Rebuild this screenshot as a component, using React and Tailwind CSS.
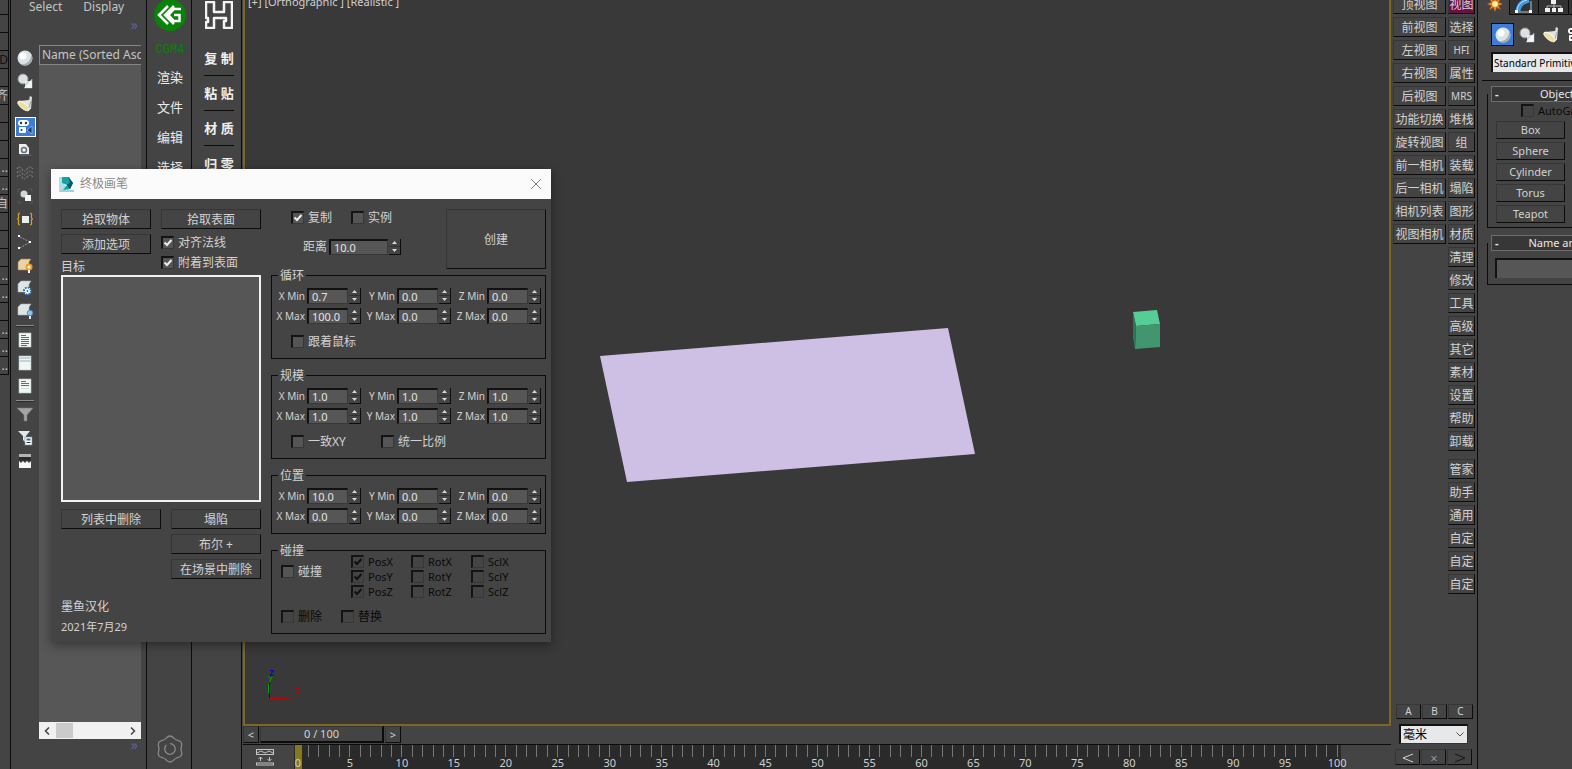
import React from 'react';
import clsx from 'clsx';

const edgeCells = ['', '', 'D', '', '齐', '', '', '', '..', '..', '自', '', '', '', '..', '..', '', '..', '..', '..'];

const cameraTools = ['顶视图', '前视图', '左视图', '右视图', '后视图', '功能切换', '旋转视图', '前一相机', '后一相机', '相机列表', '视图相机'];
const menuTools = ['视图', '选择', 'HFI', '属性', 'MRS', '堆栈', '组', '装载', '塌陷', '图形', '材质', '清理', '修改', '工具', '高级', '其它', '素材', '设置', '帮助', '卸载'];
const extraTools = ['管家', '助手', '通用', '自定', '自定', '自定'];

const frames = Array.from({ length: 101 }, (_, i) => i);

/* ---------- shared controls ---------- */

const PushButton = ({ children, className, active }) => (
  <button
    type="button"
    className={clsx(
      'shrink-0 flex items-center justify-center pt-px whitespace-nowrap border border-t-[#363636] border-l-[#363636] border-r-[#0c0c0c] border-b-[#0c0c0c] text-[#d2d2d2]',
      active ? 'bg-[#6b0f44]' : 'bg-[#444444]',
      className
    )}
  >
    {children}
  </button>
);

const Check = ({ label, checked, disabled, className }) => (
  <label className={clsx('flex items-center gap-1 h-[13px] leading-[13px] whitespace-nowrap', disabled ? 'text-[#0a0a0a]' : 'text-[#d2d2d2]', className)}>
    <span className="grid shrink-0">
      <input
        type="checkbox"
        defaultChecked={checked}
        disabled={disabled}
        className="peer appearance-none [grid-area:1/1] w-[13px] h-[13px] border-t-2 border-l-2 border-r border-b border-t-[#141414] border-l-[#141414] border-r-[#383838] border-b-[#383838] bg-[#555555] disabled:bg-[#444444]"
      />
      <svg viewBox="0 0 13 13" className="[grid-area:1/1] w-[13px] h-[13px] invisible peer-checked:visible pointer-events-none" fill="none" stroke={disabled ? '#111' : '#eee'} strokeWidth="2">
        <path d="M3.5 6.5 L6 9 L10.5 4" />
      </svg>
    </span>
    {label}
  </label>
);

const Arrows = () => (
  <span className="shrink-0 flex flex-col w-3 h-4 border-r border-b border-[#0c0c0c]">
    <button type="button" aria-label="up" className="flex-1 flex items-center justify-center border-b border-[#303030]">
      <svg viewBox="0 0 5 3" className="w-[5px] h-[3px]" fill="#d8d8d8"><path d="M2.5 0 L5 3 H0 Z" /></svg>
    </button>
    <button type="button" aria-label="down" className="flex-1 flex items-center justify-center">
      <svg viewBox="0 0 5 3" className="w-[5px] h-[3px]" fill="#d8d8d8"><path d="M2.5 3 L5 0 H0 Z" /></svg>
    </button>
  </span>
);

const inputStyle = 'h-4 min-w-0 border-t-2 border-l-2 border-r border-b border-t-[#121212] border-l-[#121212] border-r-[#383838] border-b-[#383838] bg-[#565656] pl-[3px] text-[11px] leading-[13px] text-[#e4e4e4] outline-none';

const Spinner = ({ label, value }) => (
  <div className="flex items-center w-[90px] gap-px">
    <label className="flex items-center gap-[2px]">
      <span className="w-[33px] text-right text-[10px] leading-4 text-[#d2d2d2] whitespace-nowrap">{label}</span>
      <input type="text" defaultValue={value} className={clsx(inputStyle, 'w-[41px]')} />
    </label>
    <Arrows />
  </div>
);

const Axes = ({ min, max }) => (
  <div className="flex flex-col gap-1 pt-[7px]">
    <div className="flex">
      {['X', 'Y', 'Z'].map((a, i) => <Spinner key={a} label={`${a} Min`} value={min[i]} />)}
    </div>
    <div className="flex">
      {['X', 'Y', 'Z'].map((a, i) => <Spinner key={a} label={`${a} Max`} value={max[i]} />)}
    </div>
  </div>
);

const Group = ({ title, children, className }) => (
  <fieldset className={clsx('border border-[#0c0c0c] min-w-0', className)}>
    <legend className="ml-1.5 px-0.5 h-3 leading-[14px] text-[#d2d2d2]">{title}</legend>
    {children}
  </fieldset>
);

/* ---------- paint brush window ---------- */

const BrushWindow = () => (
  <section className="absolute left-[51px] top-[169px] w-[500px] bg-[#444444] text-xs shadow-[0_3px_10px_rgba(0,0,0,0.4)]">
    <header className="flex items-center h-[30px] bg-[#fbfbfb] pl-2 pr-[9px] text-[#8c8c8c]">
      <svg viewBox="0 0 16 16" className="w-4 h-4 mr-[5px]">
        <path d="M0 1 H11 L5 8 L12 16 H0 Z" fill="#b5dde6" />
        <path d="M3 1 L10 1 L14 7 L11 13 L4 14 L8 9 L3 7 Z" fill="#12a5a5" />
        <path d="M9 1 L14 7 L11 13 L8 9 L11 6 Z" fill="#07575e" />
        <path d="M1 15 H15" stroke="#9fd3dc" strokeWidth="2" />
      </svg>
      <h1 className="flex-1">终极画笔</h1>
      <button type="button" aria-label="close">
        <svg viewBox="0 0 12 12" className="w-3 h-3" stroke="#8a8a8a"><path d="M1 1 L11 11 M11 1 L1 11" /></svg>
      </button>
    </header>
    <div className="flex gap-[10px] pt-[10px] pl-[10px] pr-[5px] pb-[5px]">
      <div className="w-[200px]">
        <div className="flex gap-[10px]">
          <div className="flex flex-col gap-[5px]">
            <PushButton className="w-[90px] h-5">拾取物体</PushButton>
            <PushButton className="w-[90px] h-5">添加选项</PushButton>
            <label htmlFor="targets" className="h-[14px] leading-4 text-[#d2d2d2]">目标</label>
          </div>
          <div className="flex flex-col gap-[7px]">
            <PushButton className="w-[100px] h-5">拾取表面</PushButton>
            <Check label="对齐法线" checked />
            <Check label="附着到表面" checked />
          </div>
        </div>
        <select id="targets" size="8" className="block w-full h-[227px] mt-[2px] border-2 border-[#f2f2f2] bg-[#565656] outline-none overflow-hidden" />
        <div className="flex justify-between mt-[7px]">
          <PushButton className="w-[100px] h-5">列表中删除</PushButton>
          <div className="flex flex-col gap-[5px]">
            <PushButton className="w-[90px] h-5">塌陷</PushButton>
            <PushButton className="w-[90px] h-5">布尔 +</PushButton>
            <PushButton className="w-[90px] h-5">在场景中删除</PushButton>
          </div>
        </div>
        <p className="mt-[18px] leading-5 text-[#d2d2d2]">墨鱼汉化</p>
        <p className="text-[11px] leading-5 text-[#d2d2d2]">2021年7月29</p>
      </div>
      <div className="flex-1">
        <div className="flex justify-between">
          <div className="pl-5 pt-[2px]">
            <div className="flex gap-[19px]">
              <Check label="复制" checked />
              <Check label="实例" />
            </div>
            <div className="flex items-center gap-px mt-[15px] pl-3">
              <label className="flex items-center gap-[2px] text-[#d2d2d2]">
                距离
                <input type="text" defaultValue="10.0" className={clsx(inputStyle, 'w-[59px]')} />
              </label>
              <Arrows />
            </div>
          </div>
          <PushButton className="w-[100px] h-[60px]">创建</PushButton>
        </div>
        <div className="flex flex-col gap-[10px]">
          <Group title="循环" className="pb-[10px]">
            <Axes min={['0.7', '0.0', '0.0']} max={['100.0', '0.0', '0.0']} />
            <Check label="跟着鼠标" className="mt-[11px] ml-[19px]" />
          </Group>
          <Group title="规模" className="pb-[10px]">
            <Axes min={['1.0', '1.0', '1.0']} max={['1.0', '1.0', '1.0']} />
            <div className="flex mt-[11px] pl-[19px]">
              <Check label="一致XY" className="w-[90px]" />
              <Check label="统一比例" />
            </div>
          </Group>
          <Group title="位置" className="pb-[9px]">
            <Axes min={['10.0', '0.0', '0.0']} max={['0.0', '0.0', '0.0']} />
          </Group>
          <Group title="碰撞" className="pb-[10px]">
            <div className="flex -mt-px pl-[9px]">
              <Check label="碰撞" className="w-[70px] mt-[10px]" />
              <div className="grid grid-cols-[60px_60px_60px] gap-y-[2px] text-[11px]">
                {['X', 'Y', 'Z'].map((a) => (
                  <React.Fragment key={a}>
                    <Check label={`Pos${a}`} checked disabled />
                    <Check label={`Rot${a}`} disabled />
                    <Check label={`Scl${a}`} disabled />
                  </React.Fragment>
                ))}
              </div>
            </div>
            <div className="flex gap-[19px] mt-3 pl-[9px]">
              <Check label="删除" disabled />
              <Check label="替换" disabled />
            </div>
          </Group>
        </div>
      </div>
    </div>
  </section>
);

/* ---------- scene explorer ---------- */

const Sphere = () => (
  <>
    <circle cx="8" cy="8" r="7.500" fill="#dde3e4" />
    <circle cx="6" cy="6" r="3.500" fill="#ffffff" />
    <path d="M14 4 A7.500 7.500 0 0 1 3 14 A9 9 0 0 0 14 4" fill="#a3adaf" />
  </>
);
const Shapes = () => (
  <>
    <circle cx="6" cy="6" r="5" fill="#dce2e3" stroke="#8f9698" />
    <path d="M15 6 V15 H7 Z" fill="#f2f5f5" stroke="#9aa2a4" strokeWidth="0.7" />
    <rect x="8" y="8" width="7" height="7" fill="#f4f6f6" fillOpacity="0.8" />
  </>
);
const Lamp = () => (
  <>
    <path d="M13 0 L15 1 L14 13 L11 14 L1 6 L2 5 L12 4 Z" fill="#dfe4e2" />
    <ellipse cx="6.500" cy="10" rx="7" ry="2.800" transform="rotate(38 6.500 10)" fill="#efe0a0" stroke="#fff" strokeWidth="0.8" />
    <path d="M12 4 L13 0 M14 5 L12 12" stroke="#8b9294" strokeWidth="0.7" />
  </>
);
const Camera = () => (
  <>
    <rect x="1" y="1" width="11" height="6" rx="3" fill="#fff" />
    <circle cx="4" cy="4" r="1.200" fill="#333" />
    <circle cx="9" cy="4" r="1.200" fill="#333" />
    <rect x="2" y="8" width="7" height="6" rx="1" fill="#fff" />
    <circle cx="4.500" cy="11" r="1" fill="#333" />
    <path d="M10 11 L15 7 V15 Z" fill="#23406b" stroke="#c9d6e8" strokeWidth="0.6" />
  </>
);
const Box = () => <path d="M1 4 L4 1 H14 L12 4 V12 H1 Z" fill="#dfe6e7" stroke="#aab4b6" strokeWidth="0.6" />;
const Page = () => <rect x="2" y="1" width="12" height="14" fill="#f1f6f4" stroke="#b7c6c8" strokeWidth="0.6" />;

const explorerIcons = [
  <Sphere />,
  <Shapes />,
  <Lamp />,
  <Camera />,
  <>
    <path d="M2 2 H9 L12 6 V12 H2 Z" fill="#eceff0" />
    <circle cx="7" cy="8" r="2.500" fill="none" stroke="#6a7072" strokeWidth="1.500" />
    <path d="M3 13 H14" stroke="#5b7394" />
  </>,
  <path d="M0 4 Q2.500 0 5 4 T10 4 T16 4 M0 8 Q2.500 4 5 8 T10 8 T16 8 M0 12 Q2.500 8 5 12 T10 12 T16 12" fill="none" stroke="#737879" strokeWidth="1.200" strokeDasharray="2 1" />,
  <>
    <circle cx="7" cy="6" r="3.500" fill="#cfd6d8" />
    <rect x="8" y="7" width="6" height="6" fill="#f2f5f5" />
    <path d="M1 4 V1 H4 M15 12 V15 H12 M12 1 H15 V4 M4 15 H1 V12" fill="none" stroke="#666" strokeDasharray="1 1" />
  </>,
  <>
    <rect x="5" y="5" width="7" height="7" fill="#e9eeee" />
    <path d="M3 2 Q1 2 1.500 5 Q2 8 0 8 Q2 8 1.500 11 Q1 14 3 14 M13 2 Q15 2 14.500 5 Q14 8 16 8 Q14 8 14.500 11 Q15 14 13 14" fill="none" stroke="#d9a01c" strokeWidth="1.200" />
  </>,
  <>
    <path d="M3 3 L13 8 L3 14" fill="none" stroke="#93999b" strokeDasharray="2 1" />
    <rect x="1" y="1" width="2" height="2" fill="#fff" /><rect x="12" y="7" width="2" height="2" fill="#fff" /><rect x="1" y="13" width="2" height="2" fill="#fff" />
  </>,
  <>
    <path d="M1 5 L4 2 H14 L12 5 V13 H1 Z" fill="#ecd3a4" stroke="#9b7a46" strokeWidth="0.6" />
    <circle cx="12" cy="10" r="3.500" fill="#f29a1e" /><circle cx="12" cy="10" r="1.500" fill="#fff" /><path d="M12 13 V16" stroke="#fff" strokeWidth="2" />
  </>,
  <>
    <Box />
    <circle cx="10.500" cy="11" r="3.500" fill="#fff" stroke="#2a6cb4" strokeWidth="2" strokeDasharray="1.700 1" />
    <circle cx="10.500" cy="11" r="1" fill="#2a6cb4" />
  </>,
  <>
    <Box />
    <circle cx="13" cy="10" r="2.800" fill="#8fc0ee" stroke="#4b86c4" strokeWidth="0.8" /><path d="M13 13 V16" stroke="#dfeaf5" strokeWidth="2" />
  </>,
  null,
  <><Page /><path d="M4 3.500 H9 M4 5.500 H12 M4 7.500 H12 M4 9.500 H12 M4 11.500 H12 M4 13.500 H10" stroke="#5d6a6c" /></>,
  <><Page /><path d="M2.500 3 H13.500 M2.500 6 H13.500" stroke="#c3d2d8" strokeWidth="2" /></>,
  <><Page /><path d="M4 3.500 H9 M4 5.500 H12 M4 7.500 H12" stroke="#5d6a80" /><path d="M4 10.500 H12" stroke="#d0dadc" /></>,
  null,
  <path d="M0 1 H16 L10 8 V14 H7 V8 Z" fill="#a3a3a3" stroke="#777" strokeWidth="0.6" />,
  <>
    <path d="M1 1 H13 L9 6 V13 L6 10 V6 Z" fill="#e3e6ea" />
    <rect x="8" y="7" width="7" height="8" fill="#fff" stroke="#7c8b9b" strokeWidth="0.6" /><rect x="9.500" y="8.500" width="4" height="2" fill="#2a6cb4" /><path d="M9.500 12.500 H13.500" stroke="#333" />
  </>,
  <>
    <rect x="2" y="1" width="12" height="4" fill="#b4b4b4" />
    <path d="M2 7 L4 8 L6 7 L8 8 L10 7 L12 8 L14 7 V4 H2 Z" fill="#2a2a2a" />
    <path d="M2 8 L4 10 L6 8 L8 10 L10 8 L12 10 L14 8 V15 H2 Z" fill="#f5f5f5" />
  </>,
];

const SceneExplorer = () => (
  <aside className="shrink-0 flex flex-col w-[136px] border-r border-[#0c0c0c] text-xs text-[#c4c4c4]">
    <nav className="flex gap-[21px] h-[13px] leading-[13px] pl-[18px]">
      <button type="button">Select</button>
      <button type="button">Display</button>
    </nav>
    <div className="h-8 pt-1 pr-2 text-right text-[14px] leading-4 text-[#5a60a4]">»</div>
    <div className="flex-1 min-h-0 flex">
      <div className="flex flex-col items-center w-[28px] pt-[2px]">
        {explorerIcons.map((icon, i) =>
          icon ? (
            <button
              key={i}
              type="button"
              aria-label={`filter ${i}`}
              className={clsx('shrink-0 flex items-center justify-center w-[21px] h-5 mt-px mb-[2px]', i === 3 && 'border border-white bg-[#3b7dd8]')}
            >
              <svg viewBox="0 0 16 16" className="w-4 h-4 shrink-0 overflow-visible">{icon}</svg>
            </button>
          ) : (
            <hr key={i} className="shrink-0 w-[18px] my-[2px] h-[2px] border-0 border-t border-t-[#8a8a8a] bg-[#2a2a2a]" />
          )
        )}
      </div>
      <div className="flex flex-col w-[102px]">
        <div className="h-5 leading-[18px] pl-[2px] border border-r-0 border-[#858585] overflow-hidden whitespace-nowrap">Name (Sorted Asc</div>
        <div className="flex-1 bg-[#575757]" />
        <div className="flex items-center justify-between h-[17px] bg-[#f1f1f1] px-[5px]">
          <div className="flex items-center gap-1.5 h-full">
            <svg viewBox="0 0 6 8" className="w-1.5 h-2" fill="none" stroke="#444" strokeWidth="1.500"><path d="M5 0.500 L1.500 4 L5 7.500" /></svg>
            <span className="w-[17px] h-[15px] bg-[#cbcbcb]" />
          </div>
          <svg viewBox="0 0 6 8" className="w-1.5 h-2" fill="none" stroke="#444" strokeWidth="1.500"><path d="M1 0.500 L4.500 4 L1 7.500" /></svg>
        </div>
      </div>
    </div>
    <div className="h-[30px] pr-2 text-right text-[14px] leading-3 text-[#5a60a4]">»</div>
  </aside>
);

/* ---------- plugin columns ---------- */

const PluginColumns = () => (
  <>
    <aside className="shrink-0 flex flex-col items-center w-[45px] border-r border-[#0c0c0c] pl-[2px] pb-1.5 text-[13px] text-[#ececec]">
      <svg viewBox="0 0 32 32" className="shrink-0 w-8 h-8">
        <circle cx="16" cy="15" r="16" fill="#088208" />
        <path d="M14 6 L5 15 L14 24 M20 6 L11 15 L20 24 M27 9 H20 L14.500 15 L20 21 H25.500 V15 H20" fill="none" stroke="#fff" strokeWidth="2.500" />
      </svg>
      <span className="mt-3 mb-[6px] h-[12px] leading-[12px] font-['Liberation_Mono'] text-[12px] text-[#088208]">CGM4</span>
      {['渲染', '文件', '编辑', '选择'].map((t) => (
        <button key={t} type="button" className="h-[30px] leading-[30px]">{t}</button>
      ))}
      <svg viewBox="0 0 28 28" className="w-7 h-7 mt-auto" fill="none" stroke="#8a8a8a" strokeWidth="1.300">
        {[0, 60, 120, 180, 240, 300].map((a) => (
          <path key={a} transform={`rotate(${a} 14 14)`} d="M8.500 4.500 C10.700 3.200 11 1 14 1 C17 1 17.300 3.200 19.500 4.500" />
        ))}
        <path d="M10.500 10 A5.300 5.300 0 1 0 14 8.700" />
      </svg>
    </aside>
    <aside className="shrink-0 flex flex-col items-center w-[50px] border-r border-[#0c0c0c] pl-[5px] text-[13px] font-bold text-[#f0f0f0]">
      <svg viewBox="0 0 28 28" className="shrink-0 w-7 h-7 mt-px" fill="none" stroke="#f4f4f4" strokeWidth="2.500" strokeLinejoin="round">
        <path d="M1 1 H9 V11 H19 V1 H27 V27 H19 V20 H21 V17 H9 V27 H1 V21 H3 V17 H1 Z" />
      </svg>
      <div className="flex flex-col items-center mt-3 divide-y divide-[#0c0c0c]">
        {['复 制', '粘 贴', '材 质', '归 零'].map((t) => (
          <button key={t} type="button" className="h-[35px] leading-[34px] whitespace-nowrap">{t}</button>
        ))}
      </div>
    </aside>
  </>
);

/* ---------- viewport and timeline ---------- */

const Viewport = () => (
  <div className="relative flex-1 min-h-0 border-2 border-t-0 border-[#7d6722] bg-[#393939] overflow-hidden">
    <div className="-mt-1.5 pl-[3px] h-4 leading-4 text-[11px] text-[#d0d0d0]">[+] [Orthographic ] [Realistic ]</div>
    <svg className="absolute inset-0 w-full h-full">
      <path d="M355 356 L703 328 L730 454 L382 482 Z" fill="#cdc0e4" />
      <path d="M888 312 L912 310 L915 324 L891 326 Z" fill="#56cd95" />
      <path d="M891 326 L915 324 V347 L890 349 Z" fill="#41966f" />
      <path d="M888 312 L891 326 L890 349 L888 338 Z" fill="#2f7556" />
      <g fill="none" strokeWidth="1">
        <path d="M23.500 693 V684" stroke="#00a000" />
        <path d="M24.500 699 V683" stroke="#0000b8" />
        <path d="M24 698.500 H37 L50 697.500" stroke="#c80000" />
        <path d="M25 670.500 H28.500 L25 675.500 H29" stroke="#0000c8" />
        <path d="M23.500 676 L25.500 679 M27.500 676 L24.500 682" stroke="#00a000" />
        <path d="M51 688 L54 693 M54 688 L51 693" stroke="#c80000" />
      </g>
    </svg>
  </div>
);

const Timeline = () => (
  <footer className="text-[#cfcfcf]">
    <div className="flex gap-px h-[18px] pb-px">
      <PushButton className="w-4 text-[11px]">&lt;</PushButton>
      <PushButton className="w-[124px] border-r-2 border-b-2 text-[11px]">0 / 100</PushButton>
      <PushButton className="w-4 text-[11px]">&gt;</PushButton>
    </div>
    <div className="flex h-[25px] border-t border-[#0c0c0c]">
      <button type="button" aria-label="track view" className="shrink-0 flex items-center justify-center w-[51px] pr-2">
        <svg viewBox="0 0 18 18" className="w-[18px] h-[18px]" fill="none" stroke="#c4c4c4">
          <rect x="0.500" y="1.500" width="17" height="5" /><path d="M1 5 L5 3 L9 5 L13 3 L17 5" />
          <path d="M4.500 13 V9 M2.500 11 L4.500 9 L6.500 11 M13.500 9 V13 M11.500 11 L13.500 13 L15.500 11" />
          <rect x="0.500" y="15" width="17" height="2" />
        </svg>
      </button>
      <div className="flex-1 flex justify-between pl-1 pr-[3px] mr-[50px] bg-[#2a2a2a] h-full">
        {frames.map((f) => (
          <div key={f} className="flex flex-col items-center w-0">
            {f === 0 ? (
              <span className="shrink-0 flex items-end justify-center w-[7px] h-6 bg-[#85791f] text-[11px] leading-3">0</span>
            ) : (
              <>
                <span className="shrink-0 w-px h-3 bg-[#777777]" />
                {f % 5 === 0 && <span className="text-[11px] leading-3">{f}</span>}
              </>
            )}
          </div>
        ))}
      </div>
    </div>
  </footer>
);

/* ---------- right side ---------- */

const ToolColumns = () => (
  <aside className="shrink-0 flex flex-col w-[87px] border-r border-[#0c0c0c] text-xs">
    <div className="flex gap-[2px] -mt-1.5 pl-[2px]">
      <div className="flex flex-col gap-[3px]">
        {cameraTools.map((t) => <PushButton key={t} className="w-[53px] h-5">{t}</PushButton>)}
      </div>
      <div className="flex flex-col gap-[3px]">
        {menuTools.map((t, i) => (
          <PushButton key={t} active={i === 0} className={clsx('w-[27px] h-5', /^[A-Z]/.test(t) && 'text-[10px]')}>{t}</PushButton>
        ))}
        <div className="flex flex-col gap-[3px] mt-[5px]">
          {extraTools.map((t, i) => <PushButton key={i} className="w-[27px] h-5">{t}</PushButton>)}
        </div>
      </div>
    </div>
    <div className="flex flex-col mt-auto pl-1 pb-1">
      <div className="flex gap-px pl-px text-[10px]">
        {['A', 'B', 'C'].map((t) => <PushButton key={t} className="w-[25px] h-[15px]">{t}</PushButton>)}
      </div>
      <div className="grid items-center w-[69px] my-[5px] ml-1">
        <select aria-label="单位" className="[grid-area:1/1] appearance-none h-5 pl-[2px] border-t-2 border-l-2 border-r border-b border-t-[#121212] border-l-[#121212] border-r-[#333333] border-b-[#333333] bg-[#e6e8ea] text-[12px] leading-4 text-black">
          <option>毫米</option>
        </select>
        <svg viewBox="0 0 8 5" className="[grid-area:1/1] justify-self-end mr-1 w-2 h-[5px] pointer-events-none" fill="none" stroke="#555"><path d="M0.500 0.500 L4 4 L7.500 0.500" /></svg>
      </div>
      <div className="flex gap-px">
        {[
          ['prev', 'M11 1 L1 5 L11 9', '#d2d2d2'],
          ['clear', 'M3.500 3 L8.500 8 M8.500 3 L3.500 8', '#9fb4c4'],
          ['next', 'M1 1 L11 5 L1 9', '#161616'],
        ].map(([name, d, color]) => (
          <PushButton key={name} className="w-[25px] h-4">
            <svg viewBox="0 0 12 10" className="w-3 h-[10px]" fill="none" stroke={color} aria-label={name}><path d={d} /></svg>
          </PushButton>
        ))}
      </div>
    </div>
  </aside>
);

const Rollout = ({ title, children, className }) => (
  <section className={clsx('w-[168px] ml-[9px]', className)}>
    <button type="button" className="relative flex items-center w-[160px] ml-1 h-4 border border-[#6c6c6c] bg-[#373737] pl-[3px] text-[11px] leading-[14px] text-[#e8e8e8]">
      <span className="w-2 font-bold text-left">-</span>
      <span className="flex-1 pr-3 text-center">{title}</span>
    </button>
    <div className="-mt-2 pt-2 border border-t-0 border-[#0c0c0c]">{children}</div>
  </section>
);

const CommandPanel = () => (
  <aside className="shrink-0 w-[94px] overflow-hidden text-[11px] text-[#d8d8d8]">
    <div className="w-[190px]">
      <div className="flex h-[15px]">
        <button type="button" aria-label="create" className="flex items-start justify-center w-[31px]">
          <svg viewBox="0 0 16 16" className="w-4 h-4 -mt-1 ml-[3px] overflow-visible">
            <circle cx="8" cy="8" r="6" fill="#b0521a" fillOpacity="0.5" />
            <path d="M8 0 L9.500 5 L14 2 L11 6.500 L16 8 L11 9.500 L14 14 L9.500 11 L8 16 L6.500 11 L2 14 L5 9.500 L0 8 L5 6.500 L2 2 L6.500 5 Z" fill="#ee8a1c" />
            <circle cx="8" cy="8" r="2.800" fill="#fff2a8" />
          </svg>
        </button>
        <button type="button" aria-label="modify" className="flex items-center justify-center w-[29px] border-l border-b border-[#0c0c0c] bg-[#333333]">
          <svg viewBox="0 0 18 14" className="w-[18px] h-[14px]" fill="none">
            <path d="M3 11 Q4 2 14 0" stroke="#3f9be6" strokeWidth="5" /><path d="M2 10 Q3 2 12 0" stroke="#b9dcf8" />
            <path d="M1 12 H16 V1" stroke="#b9c0c4" /><rect x="0" y="10" width="3" height="3" fill="#fff" /><rect x="14" y="10" width="3" height="3" fill="#fff" />
          </svg>
        </button>
        <button type="button" aria-label="hierarchy" className="flex items-center justify-center w-[30px] border-l border-b border-[#0c0c0c] bg-[#333333]">
          <svg viewBox="0 0 20 14" className="w-5 h-[14px]">
            <path d="M10 2 V9 M3 9 V6 H17 V9" fill="none" stroke="#aeb5b7" />
            <rect x="7" y="0" width="5" height="4" fill="#f0f0f0" /><rect x="1" y="8" width="5" height="4" fill="#f0f0f0" /><rect x="8" y="8" width="4" height="4" fill="#f0f0f0" /><rect x="14" y="8" width="5" height="4" fill="#f0f0f0" />
          </svg>
        </button>
        <span className="flex-1 border-l border-b border-[#0c0c0c] bg-[#333333]" />
      </div>
      <div className="flex gap-px pl-[13px] mt-2">
        {[<Sphere />, <Shapes />, <Lamp />, <Camera />].map((icon, i) => (
          <button key={i} type="button" aria-label={`category ${i}`} className={clsx('flex items-center justify-center w-[23px] h-[23px] border', i === 0 ? 'border-[#0c0c0c] bg-[#3b7dd8]' : 'border-transparent')}>
            <svg viewBox="0 0 16 16" className="w-4 h-4">{icon}</svg>
          </button>
        ))}
      </div>
      <select aria-label="primitives" className="block appearance-none w-[160px] h-5 mt-1.5 ml-[13px] pl-px border-t-2 border-l-2 border-[#121212] bg-[#e6e8ea] text-[10px] leading-4 text-black">
        <option>Standard Primitives</option>
      </select>
      <hr className="mt-2 ml-1 border-0 border-t border-t-[#0c0c0c]" />
    </div>
    <Rollout title="Object Type" className="mt-[5px]">
      <div className="pt-[2px] pb-1 pl-2">
        <Check label="AutoGrid" disabled className="ml-[25px]" />
        <div className="flex flex-col gap-[3px] mt-1">
          {['Box', 'Sphere', 'Cylinder', 'Torus', 'Teapot'].map((t) => (
            <PushButton key={t} className="w-[69px] h-[18px]">{t}</PushButton>
          ))}
        </div>
      </div>
    </Rollout>
    <Rollout title="Name and Color" className="mt-[7px]">
      <div className="pt-[7px] pb-1.5 pl-[7px]">
        <input type="text" aria-label="name" className="block w-[120px] h-5 border-t-2 border-l-2 border-[#121212] bg-[#565656]" />
      </div>
    </Rollout>
  </aside>
);

const App = () => {
  return (
    <div className="relative flex h-screen overflow-hidden bg-[#444444] font-['Noto_Sans','Noto_Sans_CJK_SC',sans-serif] select-none">
      <aside className="shrink-0 w-[11px] border-r border-[#0c0c0c] text-xs text-[#c4c4c4]">
        <div className="w-[9px] h-[15px] border-r border-b border-[#0c0c0c]" />
        {edgeCells.map((t, i) => (
          <div key={i} className={clsx('flex justify-end w-[9px] h-[18px] leading-[17px] border-r border-b border-[#0c0c0c]', t === 'D' && 'text-[#121212]')}>{t}</div>
        ))}
      </aside>
      <SceneExplorer />
      <PluginColumns />
      <main className="flex-1 min-w-0 flex flex-col pl-px">
        <Viewport />
        <Timeline />
      </main>
      <ToolColumns />
      <CommandPanel />
      <BrushWindow />
    </div>
  );
};

export default App;
